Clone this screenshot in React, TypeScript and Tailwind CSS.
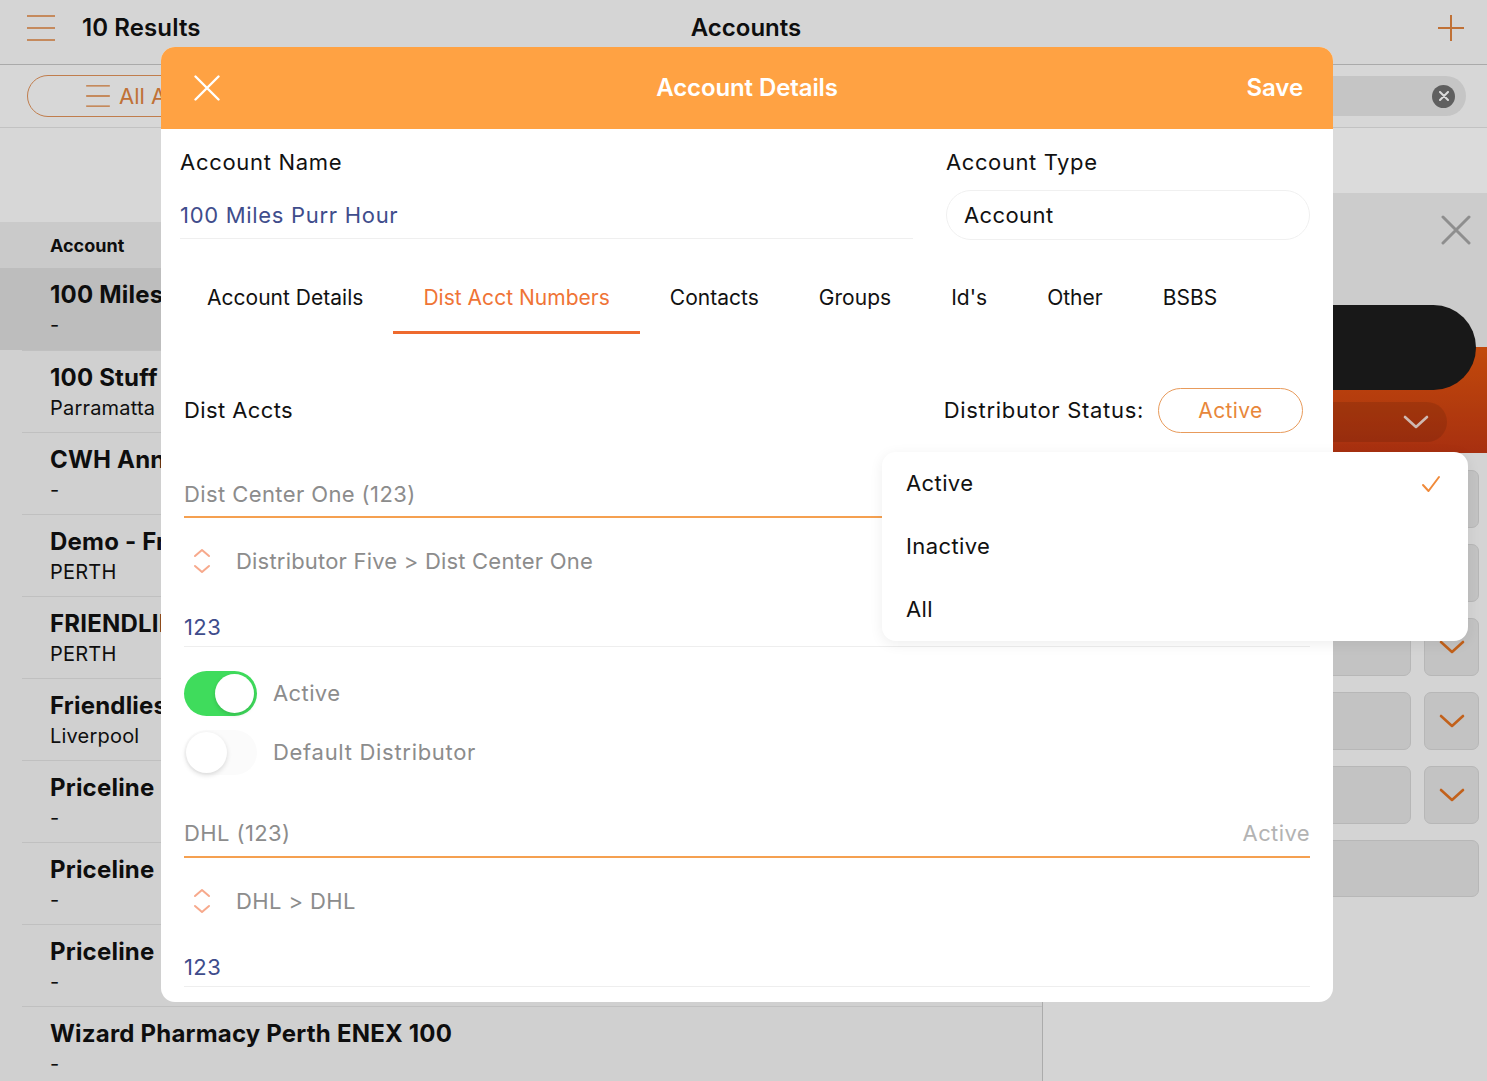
import React from "react";

const rows = [
  { t: "100 Miles Purr Hour", s: "-", sel: true },
  { t: "100 Stuff Pharmacy", s: "Parramatta" },
  { t: "CWH Annandale", s: "-" },
  { t: "Demo - Friendlies", s: "PERTH" },
  { t: "FRIENDLIES PHARMACY", s: "PERTH" },
  { t: "Friendlies Liverpool", s: "Liverpool" },
  { t: "Priceline Pharmacy", s: "-" },
  { t: "Priceline Pharmacy", s: "-" },
  { t: "Priceline Pharmacy", s: "-" },
  { t: "Wizard Pharmacy Perth ENEX 100", s: "-" },
];

function Hamburger({ w = 28, cls = "" }: { w?: number; cls?: string }) {
  return (
    <svg width={w} height={26} viewBox="0 0 28 26" className={cls}>
      <path d="M0 1 H28 M0 13 H28 M0 25 H28" stroke="currentColor" strokeWidth="1.6" />
    </svg>
  );
}

function UpDown() {
  return (
    <svg width="18" height="28" viewBox="0 0 18 28" className="text-[#F7A98C] shrink-0">
      <path d="M2 9 L9 3 L16 9" fill="none" stroke="currentColor" strokeWidth="2" strokeLinecap="round" strokeLinejoin="round" />
      <path d="M2 19 L9 25 L16 19" fill="none" stroke="currentColor" strokeWidth="2" strokeLinecap="round" strokeLinejoin="round" />
    </svg>
  );
}

function Chevron({ cls = "" }: { cls?: string }) {
  return (
    <svg width="26" height="16" viewBox="0 0 26 16" className={cls}>
      <path d="M2 3 L13 13 L24 3" fill="none" stroke="currentColor" strokeWidth="2.6" strokeLinecap="round" strokeLinejoin="round" />
    </svg>
  );
}

function Toggle({ on }: { on: boolean }) {
  return on ? (
    <div className="w-[73px] h-[45px] rounded-full bg-[#3fdc5c] flex items-center justify-end pr-[3px]">
      <div className="w-[39px] h-[39px] rounded-full bg-white shadow-[0_2px_4px_rgba(0,0,0,0.15)]" />
    </div>
  ) : (
    <div className="w-[73px] h-[45px] rounded-full bg-[#fbfbfb] flex items-center pl-[2px]">
      <div className="w-[41px] h-[41px] rounded-full bg-white shadow-[0_2px_5px_rgba(0,0,0,0.14)]" />
    </div>
  );
}

export default function App() {
  return (
    <div className="relative w-[1487px] h-[1081px] overflow-hidden bg-[#f2f2f2] font-['Inter','Noto_Sans',sans-serif] text-[#111]">
      {/* NAV */}
      <div className="h-[65px] grid grid-cols-[1fr_auto_1fr] items-center bg-[#f9f9f9] border-b border-[#c6c6c6] pl-[27px] pr-[22px] pb-[9px]">
        <div className="flex items-center">
          <Hamburger cls="text-[#e0843f]" />
          <div className="ml-[27px] text-[24px] font-semibold tracking-[0.1px]">10 Results</div>
        </div>
        <div className="text-center text-[24px] font-semibold">Accounts</div>
        <div className="flex justify-end">
          <svg width="28" height="28" viewBox="0 0 28 28" className="text-[#e0843f]">
            <path d="M14 1 V27 M1 14 H27" stroke="currentColor" strokeWidth="2" />
          </svg>
        </div>
      </div>
      {/* SEARCH ROW */}
      <div className="h-[63px] flex items-center bg-[#fbfbfb] border-b border-[#e2e2e2] pl-[27px] pr-[21px] gap-[20px]">
        <div className="w-[300px] h-[42px] rounded-full border-[1.5px] border-[#e0925a] flex items-center pl-[56px] gap-[7px] text-[#e0843f]">
          <Hamburger w={28} cls="h-[22px]" />
          <span className="text-[22px]">All Accounts</span>
        </div>
        <div className="flex-1 h-[40px] rounded-full bg-[#e6e6e6] flex items-center justify-end pr-[11px]">
          <div className="w-[23px] h-[23px] rounded-full bg-[#6f6f6f] flex items-center justify-center">
            <svg width="10" height="10" viewBox="0 0 10 10">
              <path d="M1 1 L9 9 M9 1 L1 9" stroke="white" strokeWidth="2" strokeLinecap="round" />
            </svg>
          </div>
        </div>
      </div>
      {/* CONTENT */}
      <div className="flex h-[953px] overflow-hidden">
        <div className="w-[1043px] border-r border-[#c8c8c8] flex flex-col bg-[#f3f3f3] overflow-hidden">
          <div className="h-[94px] shrink-0 bg-[#fbfbfb]" />
          <div className="h-[46px] shrink-0 bg-[#ececec] flex items-center pl-[50px] text-[18px] font-bold">Account</div>
          {rows.map((r, i) => (
            <div key={i} className={`h-[82px] shrink-0 flex flex-col pl-[22px] ${r.sel ? "bg-[#dcdcdc]" : ""}`}>
              <div className={`h-full flex flex-col justify-center pt-[2px] pl-[28px] ${i > 0 ? "border-t border-[#e0e0e0]" : ""}`}>
                <div className="text-[24px] font-bold leading-[30px] tracking-[0.2px]">{r.t}</div>
                <div className="text-[20px] leading-[30px] tracking-[0.2px]">{r.s}</div>
              </div>
            </div>
          ))}
        </div>
        <div className="flex-1 flex flex-col bg-[#f7f7f7]">
          <div className="h-[65px] shrink-0 bg-[#ffffff]" />
          <div className="relative h-[154px] shrink-0 bg-[#eeeeee] flex justify-end pr-[16px] pt-[22px]">
            <svg width="30" height="30" viewBox="0 0 30 30" className="text-[#a6a6a6]">
              <path d="M2 2 L28 28 M28 2 L2 28" stroke="currentColor" strokeWidth="3" strokeLinecap="round" />
            </svg>
            <div className="absolute right-[11px] top-[112px] w-[330px] h-[85px] rounded-r-full bg-[#1c1c1c]" />
          </div>
          <div className="h-[106px] shrink-0 bg-[linear-gradient(180deg,#e2560e,#c33813)] flex items-center justify-end pr-[40px] pt-[44px]">
            <div className="w-[300px] h-[40px] rounded-full bg-black/10 flex items-center justify-end pr-[18px]">
              <Chevron cls="text-white/80" />
            </div>
          </div>
          <div className="flex flex-col gap-[16px] pt-[17px] pl-[17px] pr-[8px]">
            {[0, 1, 2, 3, 4].map((k) => (
              <div key={k} className="flex gap-[13px] h-[58px] shrink-0">
                <div className="flex-1 rounded-[7px] bg-[#e3e3e3] border border-[#d6d6d6]" />
                <div className="w-[55px] rounded-[7px] bg-[#e3e3e3] border border-[#d6d6d6] flex items-center justify-center">
                  <Chevron cls="text-[#e27220]" />
                </div>
              </div>
            ))}
            <div className="h-[57px] shrink-0 rounded-[7px] bg-[#e3e3e3] border border-[#d6d6d6]" />
          </div>
        </div>
      </div>

      {/* DIM */}
      <div className="absolute inset-0 bg-black/[0.14]" />

      {/* MODAL */}
      <div className="absolute left-[161px] top-[47px] w-[1172px] h-[955px] bg-white rounded-[14px] overflow-hidden flex flex-col tracking-[0.4px]">
        <div className="h-[82px] shrink-0 bg-[#FFA243] grid grid-cols-[1fr_auto_1fr] items-center text-white">
          <div className="pl-[33px] flex items-center">
            <svg width="26" height="26" viewBox="0 0 26 26">
              <path d="M1.5 1.5 L24.5 24.5 M24.5 1.5 L1.5 24.5" stroke="white" strokeWidth="2.4" strokeLinecap="round" />
            </svg>
          </div>
          <div className="text-[24px] font-semibold tracking-[-0.1px]">Account Details</div>
          <div className="text-right pr-[30px] text-[24px] font-semibold tracking-[-0.1px]">Save</div>
        </div>

        {/* name/type */}
        <div className="flex pl-[19px] pr-[23px] gap-[33px] pt-[19px] shrink-0">
          <div className="w-[733px]">
            <div className="text-[22px] leading-[28px] tracking-[0.7px]">Account Name</div>
            <div className="mt-[25px] pb-[9px] border-b border-[#efefef] text-[22px] leading-[28px] text-[#3f4d8c] tracking-[0.7px]">100 Miles Purr Hour</div>
          </div>
          <div className="flex-1">
            <div className="text-[22px] leading-[28px] tracking-[0.6px]">Account Type</div>
            <div className="mt-[14px] h-[50px] rounded-full border border-[#f0f0f0] flex items-center pl-[17px] text-[22px]">Account</div>
          </div>
        </div>

        {/* tabs */}
        <div className="flex pl-[16px] mt-[24px] shrink-0 text-[21px] tracking-[0.02px]">
          {["Account Details", "Dist Acct Numbers", "Contacts", "Groups", "Id's", "Other", "BSBS"].map((t) => (
            <div
              key={t}
              className={`h-[70px] px-[30px] flex items-center ${t === "Dist Acct Numbers" ? "text-[#EF7436] border-b-[3px] border-[#EE6A2E]" : "border-b-[3px] border-transparent"}`}
            >
              {t}
            </div>
          ))}
        </div>

        {/* dist header */}
        <div className="mt-[54px] h-[45px] flex items-center pl-[23px] pr-[30px] shrink-0">
          <div className="flex-1 text-[22px]">Dist Accts</div>
          <div className="text-[22px] mr-[14px] tracking-[0.7px]">Distributor Status:</div>
          <div className="w-[145px] h-[45px] rounded-full border-[1.5px] border-[#E89B5C] flex items-center justify-center text-[21px] text-[#E8873A]">Active</div>
        </div>

        <div className="pl-[23px] pr-[23px] flex flex-col">
          {/* entry 1 */}
          <div className="mt-[37px] h-[48px] border-b-2 border-[#F5A050] flex items-center pt-[2px] text-[22px] text-[#8c8c8c]">Dist Center One (123)</div>
          <div className="h-[86px] flex items-center text-[22px] text-[#8c8c8c] tracking-[0.2px]">
            <div className="ml-[9px] mr-[25px] flex"><UpDown /></div>
            Distributor Five &gt; Dist Center One
          </div>
          <div className="h-[43px] flex items-end pb-[5px] border-b border-[#eeeeee] text-[22px] leading-[28px] text-[#3f4d8c]">123</div>

          <div className="mt-[24px] flex items-center gap-[16px]">
            <Toggle on />
            <span className="text-[22px] text-[#8c8c8c]">Active</span>
          </div>
          <div className="mt-[14px] flex items-center gap-[16px]">
            <Toggle on={false} />
            <span className="text-[22px] text-[#8c8c8c] tracking-[0.7px]">Default Distributor</span>
          </div>

          {/* entry 2 */}
          <div className="mt-[35px] h-[48px] border-b-2 border-[#F5A050] flex items-center pt-[1px] justify-between text-[22px]">
            <span className="text-[#8c8c8c]">DHL (123)</span>
            <span className="text-[#b3b3b3]">Active</span>
          </div>
          <div className="h-[86px] flex items-center text-[22px] text-[#8c8c8c]">
            <div className="ml-[9px] mr-[25px] flex"><UpDown /></div>
            DHL &gt; DHL
          </div>
          <div className="h-[43px] flex items-end pb-[5px] border-b border-[#eeeeee] text-[22px] leading-[28px] text-[#3f4d8c]">123</div>
        </div>
      </div>

      {/* POPOVER */}
      <div className="absolute left-[882px] top-[452px] w-[586px] h-[189px] bg-white rounded-[14px] shadow-[0_3px_14px_rgba(0,0,0,0.07)] flex flex-col tracking-[0.4px]">
        {["Active", "Inactive", "All"].map((o, i) => (
          <div key={o} className="h-[63px] flex items-center pl-[24px] pr-[27px] text-[22px]">
            <span className="flex-1">{o}</span>
            {i === 0 && (
              <svg width="20" height="18" viewBox="0 0 20 18" className="text-[#F08A3A]">
                <path d="M2 10 L7.5 16 L18 2" fill="none" stroke="currentColor" strokeWidth="2" strokeLinecap="round" strokeLinejoin="round" />
              </svg>
            )}
          </div>
        ))}
      </div>
    </div>
  );
}
